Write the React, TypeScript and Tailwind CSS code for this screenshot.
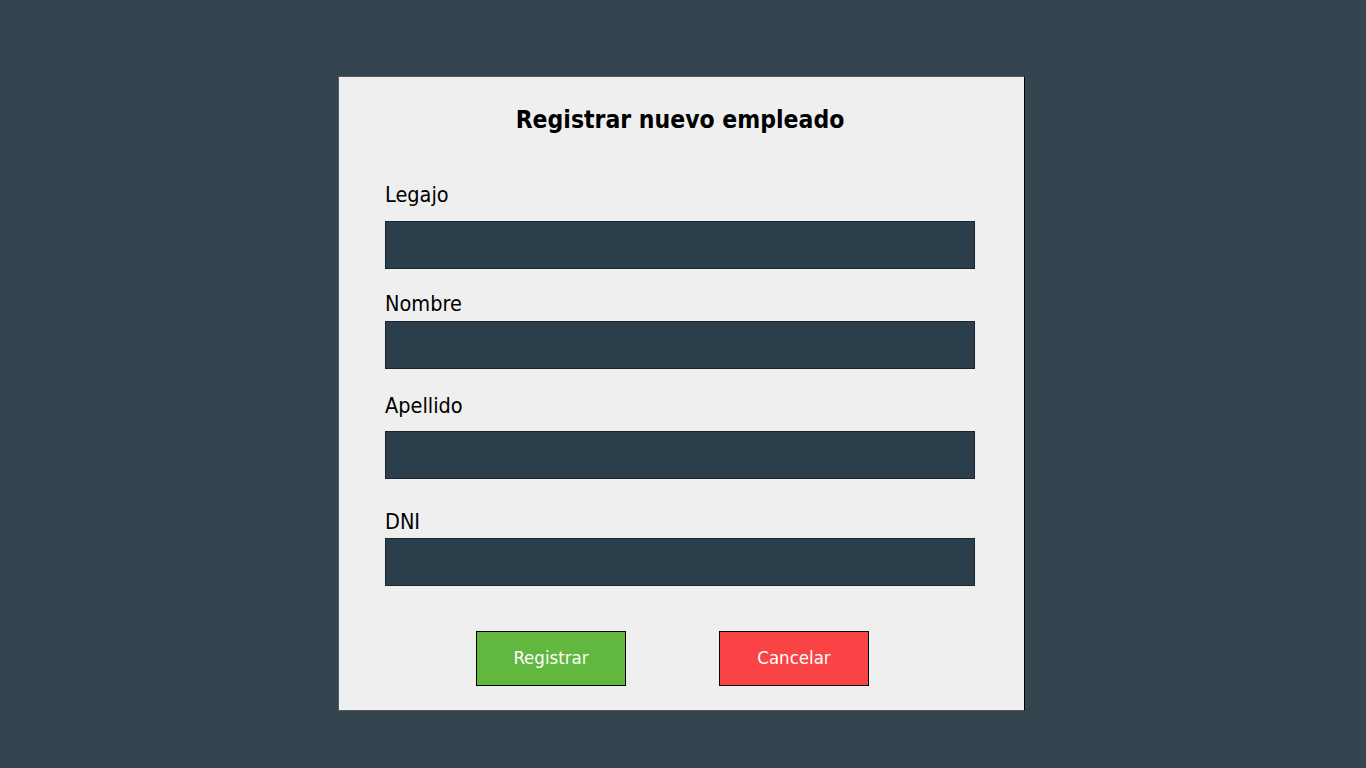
import React from "react";

const font = { fontFamily: '"DejaVu Sans Condensed", "DejaVu Sans", sans-serif' };

export default function App() {
  const inputCls = "h-[48px] w-[590px] border border-[#1a252c] bg-[#2a3e4b] outline-none";
  const labelCls = "text-[21.5px] leading-[24px] text-black";
  return (
    <div className="min-h-[768px] w-full bg-[#34454f] pt-[76px]" style={font}>
      <div className="ml-[338px] flex h-[635px] w-[687px] flex-col border border-[#555a5c] border-r-black bg-[#efefef] pl-[46px] pt-[27px]">
        <h1 className="w-[590px] text-center text-[24.5px] font-bold leading-[32px] text-black">
          Registrar nuevo empleado
        </h1>
        <div className="flex flex-col">
          <label className={`mt-[47px] ${labelCls}`}>Legajo</label>
          <input type="text" className={`mt-[14px] ${inputCls}`} />
          <label className={`mt-[23px] ${labelCls}`}>Nombre</label>
          <input type="text" className={`mt-[5px] ${inputCls}`} />
          <label className={`mt-[25px] ${labelCls}`}>Apellido</label>
          <input type="text" className={`mt-[13px] ${inputCls}`} />
          <label className={`mt-[31px] ${labelCls}`}>DNI</label>
          <input type="text" className={`mt-[4px] ${inputCls}`} />
        </div>
        <div className="mt-[45px] flex gap-[93px] pl-[91px]">
          <button className="h-[55px] w-[150px] border border-black bg-[#62b73e] pb-[2px] text-[18.5px] text-white">
            Registrar
          </button>
          <button className="h-[55px] w-[150px] border border-black bg-[#f94344] pb-[2px] text-[18.5px] text-white">
            Cancelar
          </button>
        </div>
      </div>
    </div>
  );
}
